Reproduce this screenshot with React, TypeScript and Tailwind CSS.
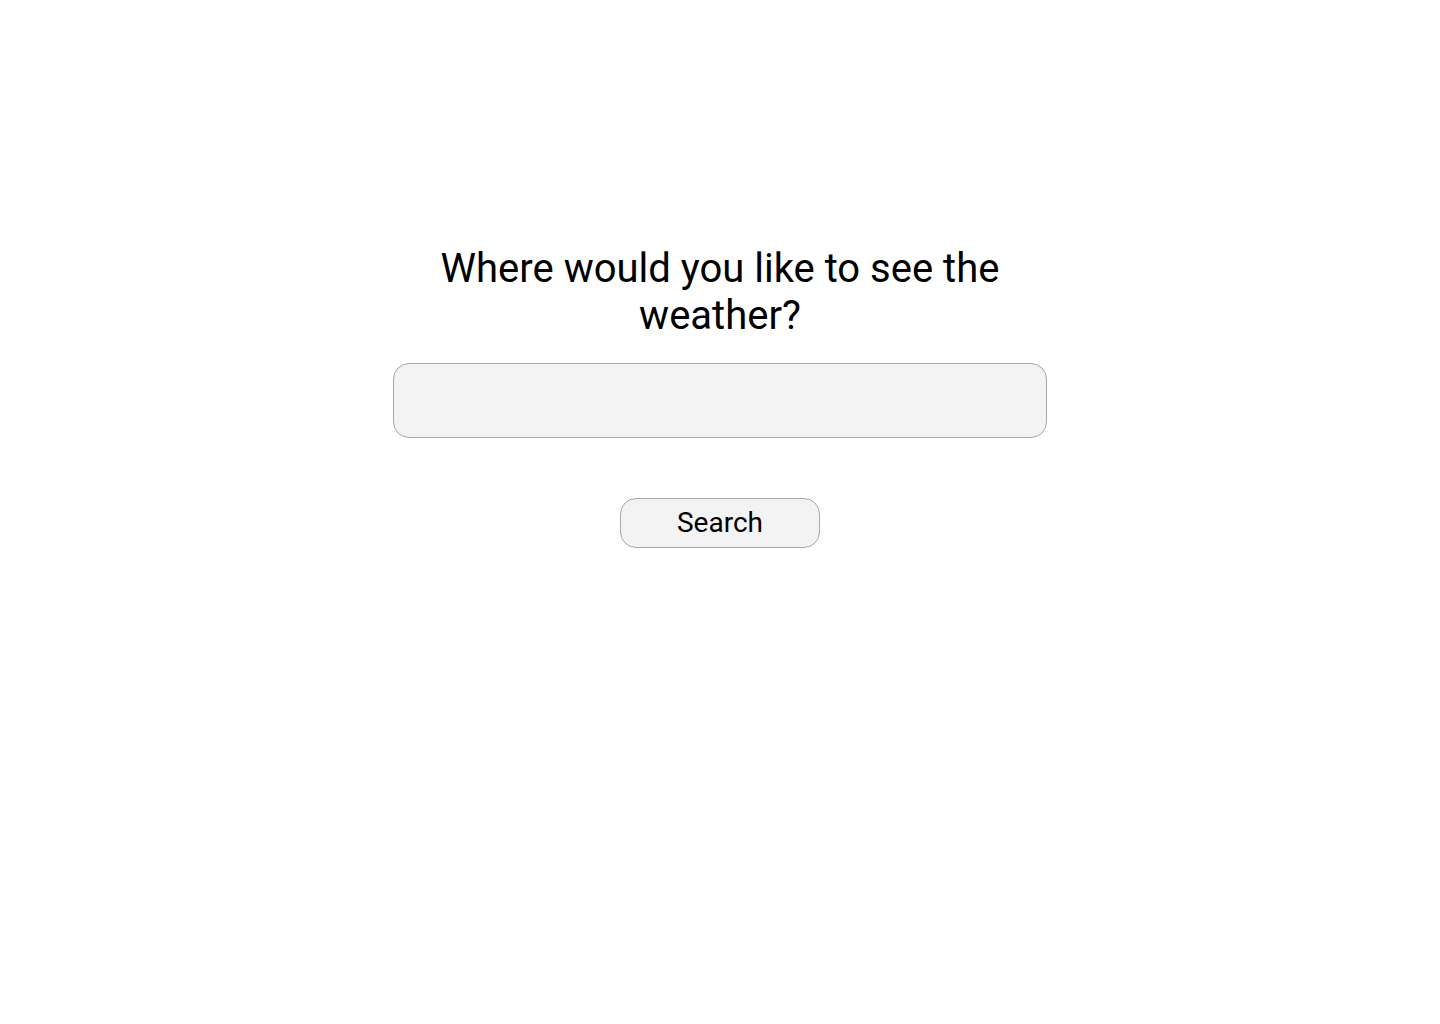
export default function App() {
  return (
    <div className="min-h-screen bg-white flex justify-center font-['Roboto',sans-serif] text-black">
      <div className="w-[654px] mt-[245px] flex flex-col items-center">
        <h1 className="text-[40px] leading-[47px] font-normal text-center">
          Where would you like to see the weather?
        </h1>
        <input
          type="text"
          className="mt-[24px] w-full h-[75px] rounded-[16px] border border-[#a8a8a8] bg-[#f3f3f3] px-4 text-2xl outline-none"
        />
        <button className="mt-[60px] w-[200px] h-[50px] rounded-[16px] border border-[#a8a8a8] bg-[#f3f3f3] text-[28px] leading-none">
          Search
        </button>
      </div>
    </div>
  );
}
